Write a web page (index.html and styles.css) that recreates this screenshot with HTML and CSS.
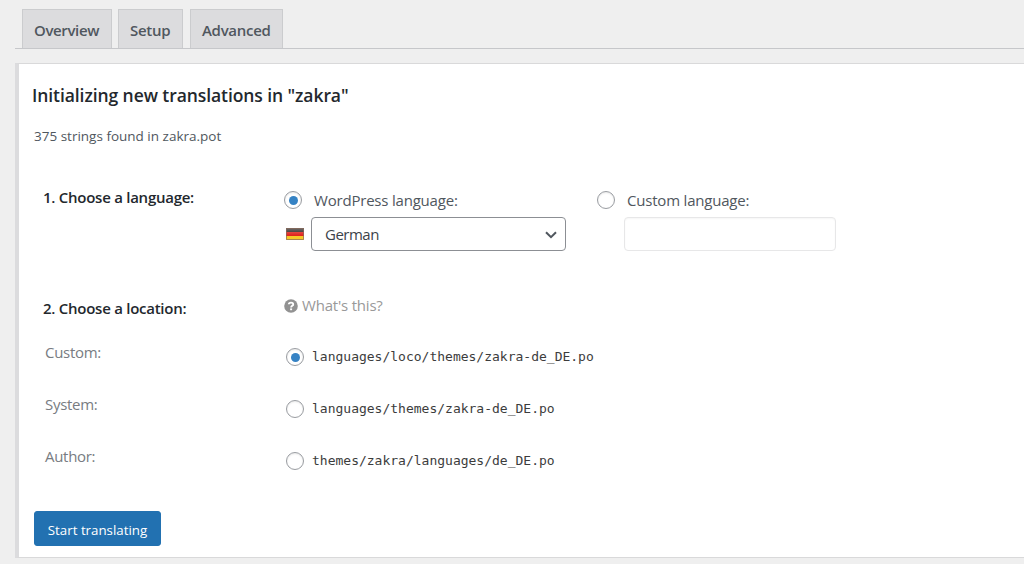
FILE: index.html
```html
<!DOCTYPE html>
<html lang="en">
<head>
<meta charset="utf-8">
<title>Initializing new translations</title>
<link rel="stylesheet" href="styles.css">
</head>
<body>
<nav class="tabs">
  <a class="tab overview">Overview</a>
  <a class="tab setup">Setup</a>
  <a class="tab advanced">Advanced</a>
</nav>
<main class="panel">
  <h2 class="title"><span>Initializing new translations in "zakra"</span></h2>
  <p class="summary"><span>375 strings found in zakra.pot</span></p>
  <section class="language">
    <h3 class="step step-language"><span>1. Choose a language:</span></h3>
    <div class="choice preset">
      <label class="option"><i class="radio checked"></i><span class="wp-label">WordPress language:</span></label>
      <div class="field">
        <svg class="flag" width="18" height="12" viewBox="0 0 18 12">
          <defs><linearGradient id="shine" x2="0" y2="1"><stop offset="0" stop-color="#fff" stop-opacity=".35"/><stop offset=".6" stop-color="#fff" stop-opacity="0"/></linearGradient></defs>
          <path fill="#29211f" d="M0 0h18v4H0z"/><path fill="#e0241f" d="M0 4h18v4H0z"/><path fill="#f7c928" d="M0 8h18v4H0z"/>
          <path fill="url(#shine)" d="M0 0h18v12H0z"/><path fill="none" stroke="#8a6a58" stroke-opacity=".7" d="M.5.5h17v11H.5z"/>
        </svg>
        <div class="select"><span>German</span>
          <svg class="chevron" width="12" height="8" viewBox="0 0 12 8"><path d="M1 1.2l5 5 5-5" fill="none" stroke="#50575e" stroke-width="2"/></svg>
        </div>
      </div>
    </div>
    <div class="choice other">
      <label class="option"><i class="radio"></i><span class="custom-label">Custom language:</span></label>
      <div class="input"></div>
    </div>
  </section>
  <section class="heading-row">
    <h3 class="step step-location"><span>2. Choose a location:</span></h3>
    <a class="help"><svg class="help-icon" width="14" height="14" viewBox="0 0 14 14"><circle cx="7" cy="7" r="6.8" fill="#929292"/><path d="M4.8 5.3C4.9 3 9.3 3 9.2 5.4 9.2 6.9 7.1 6.8 7.1 8.5" fill="none" stroke="#fff" stroke-width="1.9"/><path fill="#fff" d="M6.1 9.4h2v1.8h-2z"/></svg><span>What's this?</span></a>
  </section>
  <section class="locations">
    <div class="location"><span class="kind custom">Custom:</span><label class="path"><i class="radio checked"></i><code>languages/loco/themes/zakra-de_DE.po</code></label></div>
    <div class="location"><span class="kind system">System:</span><label class="path"><i class="radio"></i><code>languages/themes/zakra-de_DE.po</code></label></div>
    <div class="location"><span class="kind author">Author:</span><label class="path"><i class="radio"></i><code>themes/zakra/languages/de_DE.po</code></label></div>
  </section>
  <button class="start"><span>Start translating</span></button>
</main>
</body>
</html>
```
FILE: styles.css
```css
* { box-sizing: border-box; }
body { margin: 0; height: 564px; overflow: hidden; background: #efefef; color: #50575e; font: 15px/20px "Open Sans", "Noto Sans", sans-serif; }
h2, h3, p { margin: 0; }
span, code { white-space: nowrap; }
.tabs { display: flex; height: 49px; margin-left: 15px; padding: 9px 0 0 7px; border-bottom: 1px solid #c6c7ca; }
.tab { height: 39px; padding-left: 11px; border: 1px solid #cbccce; border-bottom: 0; background: #dcdcde; font-weight: 600; font-size: 15px; line-height: 41px; }
.overview { width: 90px; margin-right: 6px; letter-spacing: -.37px; }
.setup { width: 65px; margin-right: 7px; letter-spacing: -.3px; }
.advanced { width: 93px; letter-spacing: -.3px; }
.panel { height: 495px; margin: 14px 0 0 15px; border: 1px solid #d9d9da; border-left: 4px solid #dcdcde; border-right: 0; background: #fff; }
.title { height: 52px; padding: 20px 0 0 13px; color: #23282d; font-size: 17.5px; font-weight: 600; line-height: 22px; letter-spacing: -.08px; }
.summary { height: 67px; padding: 10px 0 0 15px; font-size: 13.5px; }
.language { display: flex; height: 110px; }
.step { width: 265px; padding-left: 24px; color: #23282d; font-size: 15px; font-weight: 600; letter-spacing: -.26px; }
.step-language { padding-top: 4px; }
.choice { width: 313px; padding-top: 7px; }
.option { display: flex; align-items: center; height: 20px; }
.option span { margin-left: 12px; letter-spacing: -.2px; }
.radio { display: flex; align-items: center; justify-content: center; flex: none; width: 18px; height: 18px; border: 1px solid #999ca1; border-radius: 50%; background: #fff; box-shadow: inset 0 1px 2px #00000018; }
.checked::before { content: ""; width: 9px; height: 9px; border-radius: 50%; background: #3582c4; }
.field { display: flex; align-items: center; height: 34px; margin-top: 7px; padding-left: 2px; }
.flag { margin-right: 7px; }
.select { display: flex; align-items: center; justify-content: space-between; width: 255px; height: 34px; padding: 0 8px 0 13px; border: 1px solid #8c8f94; border-radius: 4px; color: #3c434a; letter-spacing: -.5px; }
.chevron { margin-top: 2px; }
.input { width: 212px; height: 34px; margin: 7px 0 0 27px; border: 1px solid #e7e7e8; border-radius: 4px; box-shadow: inset 0 1px 2px #0000000a; }
.heading-row { display: flex; height: 49px; }
.step-location { padding-top: 5px; }
.help { display: flex; align-items: center; height: 26px; color: #999; }
.help span { margin: -2px 0 0 4px; letter-spacing: -.2px; }
.location { display: flex; height: 52px; color: #787c82; }
.kind { width: 267px; padding: 0 0 0 26px; letter-spacing: -.3px; }
.path { display: flex; align-items: center; height: 30px; }
code { margin-left: 8px; color: #3c3c3c; font: 13px/20px "DejaVu Sans Mono", monospace; }
.start { display: block; width: 127px; height: 35px; margin: 13px 0 0 15px; padding: 3px 0 0; border: 1px solid #2271b1; border-radius: 3px; background: #2271b1; color: #fff; font: 13.3px/20px "Open Sans", "Noto Sans", sans-serif; }
```
